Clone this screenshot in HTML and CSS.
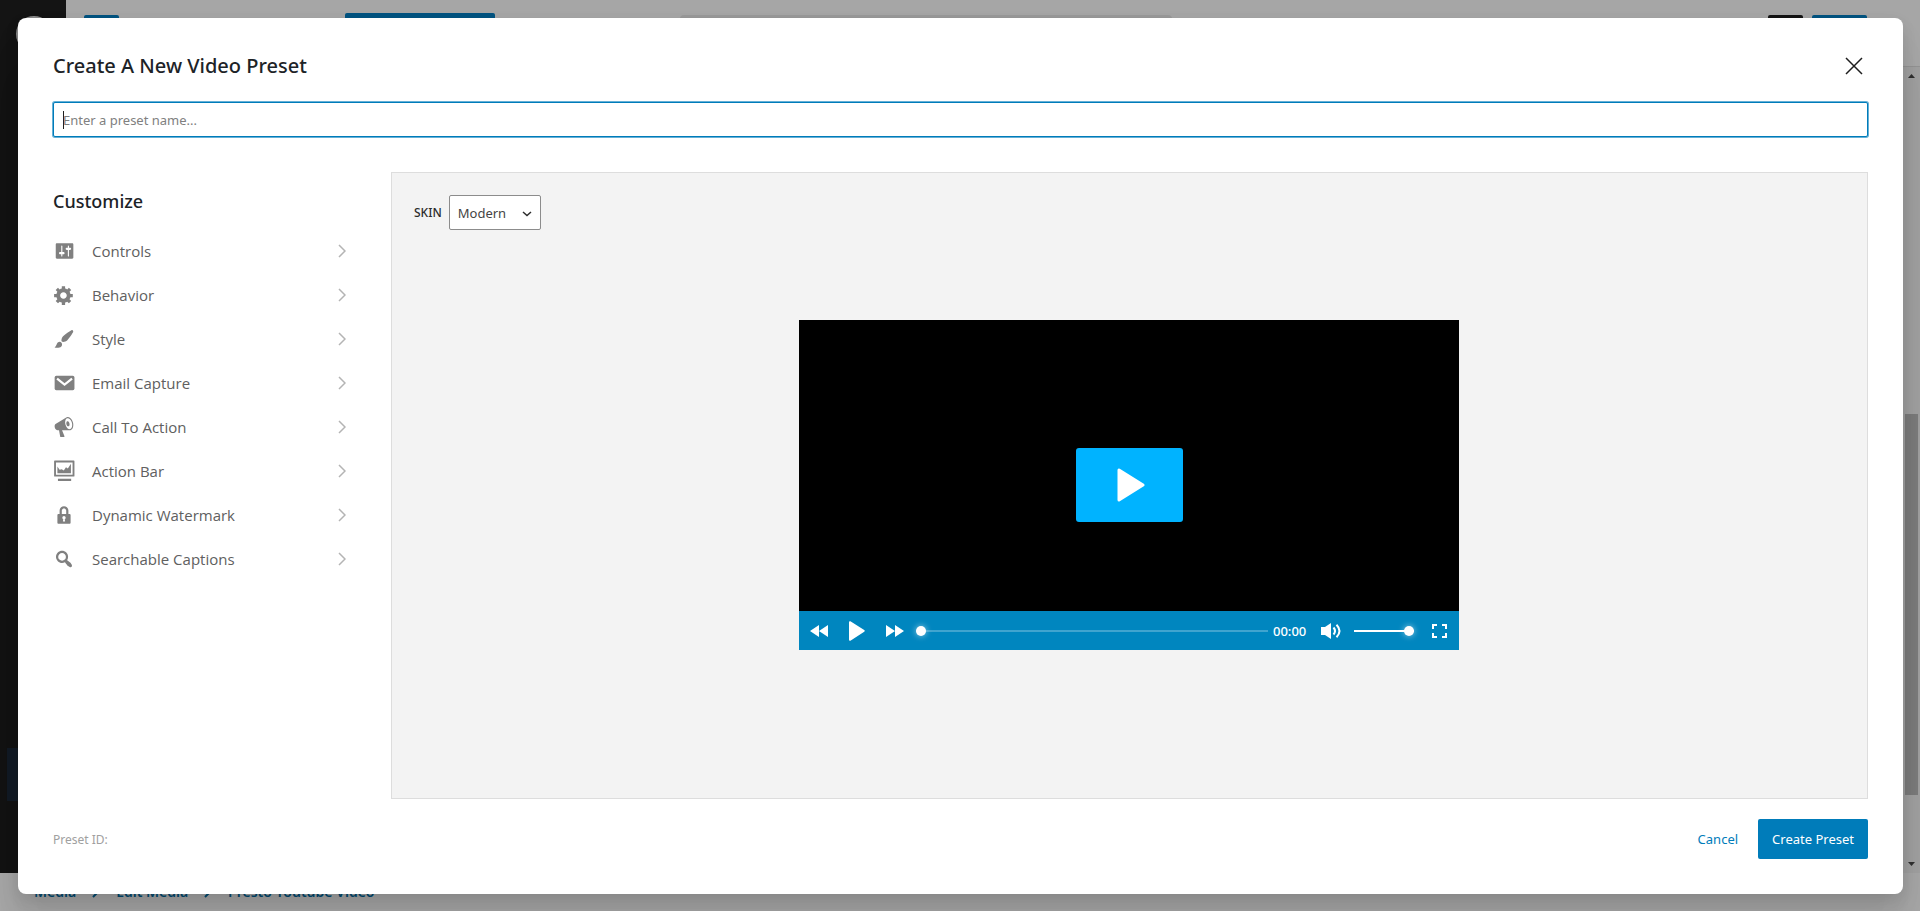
FILE: index.html
```html
<!DOCTYPE html>
<html lang="en">
<head>
<meta charset="utf-8">
<title>Create A New Video Preset</title>
<link rel="stylesheet" href="styles.css">
</head>
<body>
<div class="editor" aria-hidden="true">
  <header class="topbar">
    <span class="stub stub-insert"></span>
    <span class="stub stub-tab"></span>
    <span class="stub stub-search"></span>
    <span class="stub stub-dark"></span>
    <span class="stub stub-save"></span>
  </header>
  <aside class="rail"><span class="rail-logo"></span><span class="rail-current"></span></aside>
  <div class="scrollbar">
    <svg width="9" height="6" viewBox="0 0 9 6"><path d="M1 5 4.500 1 8 5z"/></svg>
    <span class="scroll-thumb"></span>
    <svg width="9" height="6" viewBox="0 0 9 6"><path d="M1 1 4.500 5 8 1z"/></svg>
  </div>
  <nav class="crumbs">
    <span>Media</span>
    <svg width="8" height="12" viewBox="0 0 8 12"><path d="m1 1 5 5-5 5"/></svg>
    <span>Edit Media</span>
    <svg width="8" height="12" viewBox="0 0 8 12"><path d="m1 1 5 5-5 5"/></svg>
    <span>Presto Youtube Video</span>
  </nav>
</div>

<div class="overlay">
  <section class="modal" role="dialog" aria-labelledby="dialog-title">
    <header class="modal-head">
      <h1 id="dialog-title">Create A New Video Preset</h1>
      <button class="close" type="button" aria-label="Close">
        <svg width="18" height="18" viewBox="0 0 18 18"><path d="m1 1 16 16M17 1 1 17"/></svg>
      </button>
    </header>
    <input class="name" type="text" placeholder="Enter a preset name..." aria-label="Preset name">

    <div class="body">
      <nav class="menu">
        <h2>Customize</h2>
        <button type="button" class="item">
          <svg class="icon" viewBox="0 0 20 20"><path d="M18.500 16V4c0-.55-.45-1-1-1h-14c-.55 0-1 .45-1 1v12c0 .55.45 1 1 1h14c.55 0 1-.45 1-1zM8.500 11h1c.55 0 1 .45 1 1s-.45 1-1 1h-1v1.500c0 .28-.22.5-.5.5s-.5-.22-.5-.5V13h-1c-.55 0-1-.45-1-1s.45-1 1-1h1V5.500c0-.28.22-.5.5-.5s.5.22.5.5V11zm5-2h-1c-.55 0-1-.45-1-1s.45-1 1-1h1V5.500c0-.28.22-.5.5-.5s.5.22.5.5V7h1c.55 0 1 .45 1 1s-.45 1-1 1h-1v5.500c0 .28-.22.5-.5.5s-.5-.22-.5-.5V9z"/></svg>
          <span>Controls</span>
          <svg class="chevron" viewBox="0 0 8 14"><path d="m1 1 6 6-6 6"/></svg>
        </button>
        <button type="button" class="item">
          <svg class="icon" viewBox="0 0 20 20"><path d="M18 12h-2.180c-.17.7-.44 1.350-.81 1.930l1.540 1.540-2.100 2.100-1.540-1.540c-.58.36-1.230.63-1.910.79V19H8v-2.180c-.68-.16-1.330-.43-1.910-.79l-1.540 1.540-2.120-2.120 1.540-1.540c-.36-.58-.63-1.230-.79-1.910H1V9.030h2.170c.16-.7.44-1.350.8-1.940L2.430 5.550l2.100-2.100 1.540 1.540c.58-.37 1.240-.64 1.930-.81V2h3v2.180c.68.16 1.330.43 1.910.79l1.540-1.540 2.120 2.120-1.540 1.540c.36.59.64 1.240.8 1.940H18V12zm-8.500 1.500c1.660 0 3-1.340 3-3s-1.340-3-3-3-3 1.340-3 3 1.340 3 3 3z"/></svg>
          <span>Behavior</span>
          <svg class="chevron" viewBox="0 0 8 14"><path d="m1 1 6 6-6 6"/></svg>
        </button>
        <button type="button" class="item">
          <svg class="icon" viewBox="0 0 20 20"><path d="M18.330 3.570s.27-.8-.31-1.360c-.53-.52-1.220-.24-1.220-.24-.61.3-5.760 3.470-7.670 5.570-.86.96-2.060 3.790-1.090 4.820.92.98 3.960-.17 4.790-1 2.060-2.060 5.210-7.170 5.500-7.790zM1.400 17.650c2.370-1.560 1.460-3.410 3.230-4.640.93-.65 2.220-.62 3.080.29.63.67.8 2.570-.16 3.460-1.570 1.450-4 1.550-6.150.89z"/></svg>
          <span>Style</span>
          <svg class="chevron" viewBox="0 0 8 14"><path d="m1 1 6 6-6 6"/></svg>
        </button>
        <button type="button" class="item">
          <svg class="icon" viewBox="0 0 20 20"><rect x="1.500" y="3.500" width="18" height="13" rx="1.500"/><path class="cut" d="m3.700 6 6.800 5.500L17.300 6"/></svg>
          <span>Email Capture</span>
          <svg class="chevron" viewBox="0 0 8 14"><path d="m1 1 6 6-6 6"/></svg>
        </button>
        <button type="button" class="item">
          <svg class="icon" viewBox="0 0 20 20"><path d="M18.150 5.940c.46 1.620.38 3.220-.02 4.480-.42 1.280-1.260 2.180-2.300 2.480-.16.06-.26.06-.4.06-.06.02-.12.02-.18.02-.06.02-.14.02-.22.02h-6.800l2.220 5.500c.02.14-.06.26-.14.34-.08.1-.24.16-.34.16H6.950c-.1 0-.26-.06-.34-.16-.08-.08-.16-.2-.14-.34l-1-5.500H4.250l-.02-.02c-.5.06-1.080-.18-1.540-.62s-.88-1.080-1.060-1.880c-.24-.8-.2-1.560-.02-2.200.18-.62.58-1.080 1.060-1.300l.02-.02 9-5.400c.1-.06.18-.1.24-.16.06-.04.14-.08.24-.12.16-.08.28-.12.5-.18 1.040-.3 2.240.1 3.220.98s1.840 2.240 2.260 3.860zm-2.580 5.980h-.02c.4-.1.74-.34 1.040-.7.58-.7.86-1.760.86-3.040 0-.64-.1-1.300-.28-1.980-.34-1.360-1.020-2.500-1.780-3.240s-1.680-1.100-2.460-.88c-.82.22-1.400.96-1.700 2-.32 1.040-.28 2.360.06 3.720.38 1.360 1 2.500 1.800 3.240.78.74 1.620 1.100 2.480.88zm-2.540-7.080c.22-.04.42-.02.62.04.38.16.76.48 1.020 1s.42 1.200.42 1.780c0 .3-.04.56-.12.8-.18.48-.44.84-.86.94-.34.1-.8-.06-1.140-.4s-.64-.86-.78-1.500c-.18-.62-.12-1.240.02-1.720s.48-.84.82-.94z"/></svg>
          <span>Call To Action</span>
          <svg class="chevron" viewBox="0 0 8 14"><path d="m1 1 6 6-6 6"/></svg>
        </button>
        <button type="button" class="item">
          <svg class="icon" viewBox="0 0 20 20"><path fill-rule="evenodd" d="M1.600 .5h17.300a.6.6 0 0 1 .6.6v13.400a.6.6 0 0 1-.6.6H1.600a.6.6 0 0 1-.6-.6V1.100A.6.6 0 0 1 1.600 .5zM2.700 2.200v11.200h15.100V2.200z"/><path d="M4 12V6l2 2.800 2-.3 1.800 1 2-2.800 1.700 1 2.800-4.400V12zM4.500 17h12v2h-12z"/></svg>
          <span>Action Bar</span>
          <svg class="chevron" viewBox="0 0 8 14"><path d="m1 1 6 6-6 6"/></svg>
        </button>
        <button type="button" class="item">
          <svg class="icon" viewBox="0 0 20 20"><path d="M14 9h1c.55 0 1 .45 1 1v7c0 .55-.45 1-1 1H5c-.55 0-1-.45-1-1v-7c0-.55.45-1 1-1h1V6c0-2.210 1.790-4 4-4s4 1.790 4 4v3zm-2 0V6c0-1.100-.9-2-2-2s-2 .9-2 2v3h4zm-1 7l-.36-2.150c.51-.24.86-.75.86-1.350 0-.83-.67-1.500-1.500-1.500s-1.500.67-1.500 1.500c0 .6.35 1.110.86 1.350L9 16h2z"/></svg>
          <span>Dynamic Watermark</span>
          <svg class="chevron" viewBox="0 0 8 14"><path d="m1 1 6 6-6 6"/></svg>
        </button>
        <button type="button" class="item">
          <svg class="icon" viewBox="0 0 20 20"><path d="M12.140 4.180c1.870 1.870 2.110 4.750.72 6.890.12.1.22.21.36.31.2.16.47.36.81.59.34.24.56.39.66.47.42.31.73.57.94.78.32.32.6.65.84 1 .25.35.44.69.59 1.040.14.35.21.68.18 1-.02.32-.14.59-.36.81s-.49.34-.81.36c-.31.02-.65-.04-.99-.19-.35-.14-.7-.34-1.040-.59-.35-.24-.68-.52-1-.84-.21-.21-.47-.52-.77-.93-.1-.13-.25-.35-.47-.66-.22-.32-.4-.57-.56-.78-.16-.2-.29-.35-.44-.5-2.070 1.090-4.690.76-6.440-.98-2.140-2.150-2.140-5.640 0-7.780 2.150-2.150 5.630-2.150 7.780 0zm-1.410 6.360c1.360-1.370 1.360-3.580 0-4.950-1.370-1.370-3.590-1.370-4.950 0-1.370 1.370-1.370 3.580 0 4.950 1.360 1.370 3.580 1.370 4.950 0z"/></svg>
          <span>Searchable Captions</span>
          <svg class="chevron" viewBox="0 0 8 14"><path d="m1 1 6 6-6 6"/></svg>
        </button>
      </nav>

      <div class="preview">
        <div class="skin">
          <label for="skin">SKIN</label>
          <div class="select">
            <select id="skin"><option>Modern</option><option>Stacked</option></select>
            <svg width="10" height="6" viewBox="0 0 10 6"><path d="m1 1 4 3.500L9 1"/></svg>
          </div>
        </div>
        <div class="player">
          <div class="screen">
            <button class="big-play" type="button" aria-label="Play video">
              <svg width="28" height="34" viewBox="0 0 28 34"><path d="M2 2v30L26 17z"/></svg>
            </button>
          </div>
          <div class="bar">
            <button type="button" aria-label="Rewind"><svg width="18" height="12" viewBox="0 0 18 12"><path d="M9 0v12L0 6zM18 0v12L9 6z"/></svg></button>
            <button type="button" aria-label="Play" class="play"><svg width="16" height="20" viewBox="0 0 16 20"><path d="M0 1.500C0 .2 1 0 1.800.5l13.400 8.600c.8.500.8 1.200 0 1.700L1.800 19.500C1 20 0 19.800 0 18.500z"/></svg></button>
            <button type="button" aria-label="Forward"><svg width="18" height="12" viewBox="0 0 18 12"><path d="M0 0v12l9-6zM9 0v12l9-6z"/></svg></button>
            <input class="seek" type="range" min="0" max="100" value="0" aria-label="Seek">
            <span class="time">00:00</span>
            <button type="button" aria-label="Mute" class="mute"><svg width="20" height="16" viewBox="0 0 20 16"><path d="M0 4h4l6-4v16l-6-4H0z"/><path class="wave" d="M12.500 4.500q3 3.500 0 7M15.500 1.800q6 6.200 0 12.400"/></svg></button>
            <input class="volume" type="range" min="0" max="100" value="100" aria-label="Volume">
            <button type="button" aria-label="Fullscreen"><svg width="15" height="14" viewBox="0 0 15 14"><path class="frame" d="M1 5V1h4M10 1h4v4M14 9v4h-4M5 13H1V9"/></svg></button>
          </div>
        </div>
      </div>
    </div>

    <footer class="foot">
      <span class="preset-id">Preset ID:</span>
      <button type="button" class="cancel">Cancel</button>
      <button type="button" class="create">Create Preset</button>
    </footer>
  </section>
</div>
</body>
</html>
```
FILE: styles.css
```css
* { box-sizing: border-box; }
html, body { height: 100%; }
body {
  margin: 0;
  overflow: hidden;
  font-family: "Noto Sans", "Open Sans", sans-serif;
  font-size: 13px;
  color: #1e1e1e;
  background: #a6a6a6;
}
button, input, select { font: inherit; color: inherit; }
button { border: 0; padding: 0; background: none; cursor: pointer; }
svg { display: block; flex: none; }

/* Page behind the dialog */
.editor {
  height: 100%;
  display: grid;
  grid-template: 67px 1fr 38px / 66px 1fr 17px;
}
.topbar {
  grid-area: 1 / 2 / 2 / 4;
  display: flex;
  align-items: flex-start;
  padding: 15px 53px 0 18px;
  border-bottom: 1px solid #939393;
}
.stub { height: 36px; border-radius: 2px; background: #005380; }
.stub-insert { width: 35px; }
.stub-tab { width: 150px; margin: -2px 185px 0 226px; }
.stub-search { width: 492px; border-radius: 4px; background: #999; }
.stub-dark { width: 35px; margin-left: auto; background: #141414; }
.stub-save { width: 55px; margin-left: 9px; }
.rail {
  grid-area: 1 / 1 / 3 / 2;
  background: #141414;
  display: flex;
  flex-direction: column;
  justify-content: space-between;
  padding: 16px 0 72px;
}
.rail-logo { width: 36px; height: 36px; margin-left: 16px; border: 2px solid #8a8a8a; border-radius: 50%; }
.rail-current { height: 53px; margin-left: 7px; background: #141c26; }
.scrollbar {
  grid-area: 2 / 3 / 3 / 4;
  display: flex;
  flex-direction: column;
  align-items: center;
  padding: 6px 0;
  background: #a0a0a0;
  fill: #303030;
}
.scroll-thumb { width: 13px; height: 381px; margin: 335px 0 auto; background: #7b7b7b; }
.crumbs {
  grid-area: 3 / 1 / 4 / 4;
  display: flex;
  align-items: center;
  gap: 16px;
  padding-left: 34px;
  font-size: 14px;
  font-weight: 600;
  line-height: 38px;
  color: #004a70;
  fill: none;
  stroke: #004a70;
  stroke-width: 2;
}
.crumbs span { stroke: none; }

/* Dialog */
.overlay {
  position: absolute;
  inset: 0;
  display: flex;
  padding: 18px 17px 17px 18px;
}
.modal {
  flex: 1;
  display: flex;
  flex-direction: column;
  padding: 35px;
  border-radius: 8px;
  background: #fff;
  box-shadow: 0 5px 15px rgba(0, 0, 0, .08), 0 15px 27px rgba(0, 0, 0, .07), 0 30px 36px rgba(0, 0, 0, .04), 0 50px 43px rgba(0, 0, 0, .02);
}
.modal-head {
  display: flex;
  justify-content: space-between;
  align-items: center;
  height: 26px;
  margin-bottom: 23px;
}
h1, h2 { margin: 0; font-weight: 500; color: #1d2327; }
h1 { font-size: 20px; line-height: 26px; }
.close { padding: 5px; }
.close svg { fill: none; stroke: #1e1e1e; stroke-width: 1.500; }
.name {
  height: 35px;
  padding: 0 9px;
  border: 1px solid #007cba;
  border-radius: 2px;
  outline: 0;
  box-shadow: 0 0 0 1px #66b0d6;
  background: linear-gradient(#1e1e1e, #1e1e1e) 9px center / 1px 18px no-repeat #fff;
}
.name::placeholder { color: #808080; }

.body { flex: 1; display: flex; margin: 35px 0 20px; min-height: 0; }
.menu { flex: 0 0 338px; padding: 14px 45px 0 0; }
h2 { font-size: 18px; line-height: 30px; margin-bottom: 13px; }
.item {
  display: flex;
  align-items: center;
  width: 100%;
  height: 44px;
  gap: 17px;
  font-family: "Open Sans", "Noto Sans", sans-serif;
  font-size: 15px;
  color: #606060;
  text-align: left;
}
.item span { flex: 1; }
.icon { width: 22px; height: 22px; fill: #808080; }
.cut { fill: none; stroke: #fff; stroke-width: 2; }
.chevron { width: 8px; height: 14px; fill: none; stroke: #b4b4b4; stroke-width: 1.500; }

.preview {
  flex: 1;
  display: grid;
  padding: 22px 23px 23px 22px;
  border: 1px solid #ddd;
  background: #f3f3f3;
}
.skin { grid-area: 1 / 1; place-self: start; display: flex; align-items: center; gap: 7px; }
.skin label { font-size: 12px; font-weight: 500; color: #2c2c2c; }
.select { display: grid; align-items: center; }
.select select {
  grid-area: 1 / 1;
  appearance: none;
  width: 92px;
  height: 35px;
  padding: 0 8px;
  border: 1px solid #8c8c8c;
  border-radius: 2px;
  font-size: 13px;
  color: #444;
  background: #fff;
}
.select svg {
  grid-area: 1 / 1;
  justify-self: end;
  margin: 2px 9px 0 0;
  fill: none;
  stroke: #2c2c2c;
  stroke-width: 1.500;
  pointer-events: none;
}
.player {
  grid-area: 1 / 1;
  place-self: center;
  width: 660px;
  aspect-ratio: 2;
  display: flex;
  flex-direction: column;
  background: #000;
}
.screen { flex: 1; display: flex; justify-content: center; align-items: flex-end; padding-bottom: 89px; }
.big-play {
  width: 107px;
  height: 74px;
  display: grid;
  place-items: center;
  padding-left: 4px;
  border-radius: 3px;
  background: #00b3ff;
}
.big-play svg { fill: #fff; stroke: #fff; stroke-width: 3; stroke-linejoin: round; }
.bar {
  display: flex;
  align-items: center;
  height: 39px;
  padding: 0 12px 0 11px;
  background: #0086bf;
  color: #fff;
  fill: #fff;
}
.bar .play { margin: 0 21px; }
.bar .wave, .bar .frame { fill: none; stroke: #fff; stroke-width: 2; }
.seek, .volume {
  appearance: none;
  height: 10px;
  margin: 0;
  background: linear-gradient(#fff, #fff) center / 100% 2px no-repeat;
}
.seek { flex: 1; min-width: 0; margin: 0 5px 0 12px; background-image: linear-gradient(#40a4cf, #40a4cf); }
.volume { width: 60px; margin: 0 18px 0 13px; }
.seek::-webkit-slider-thumb, .volume::-webkit-slider-thumb {
  appearance: none;
  width: 10px;
  height: 10px;
  border-radius: 50%;
  background: #fff;
  box-shadow: 0 0 6px rgba(255, 255, 255, .6);
}
.time { width: 35px; font-size: 13px; font-weight: 500; }
.mute { margin-left: 13px; }

.foot { display: flex; align-items: center; gap: 20px; height: 40px; }
.preset-id { margin-right: auto; font-size: 12px; color: #a0a0a0; }
.cancel { color: #007cba; }
.create { height: 40px; padding: 0 14px; border-radius: 2px; background: #007cba; color: #fff; }
```
